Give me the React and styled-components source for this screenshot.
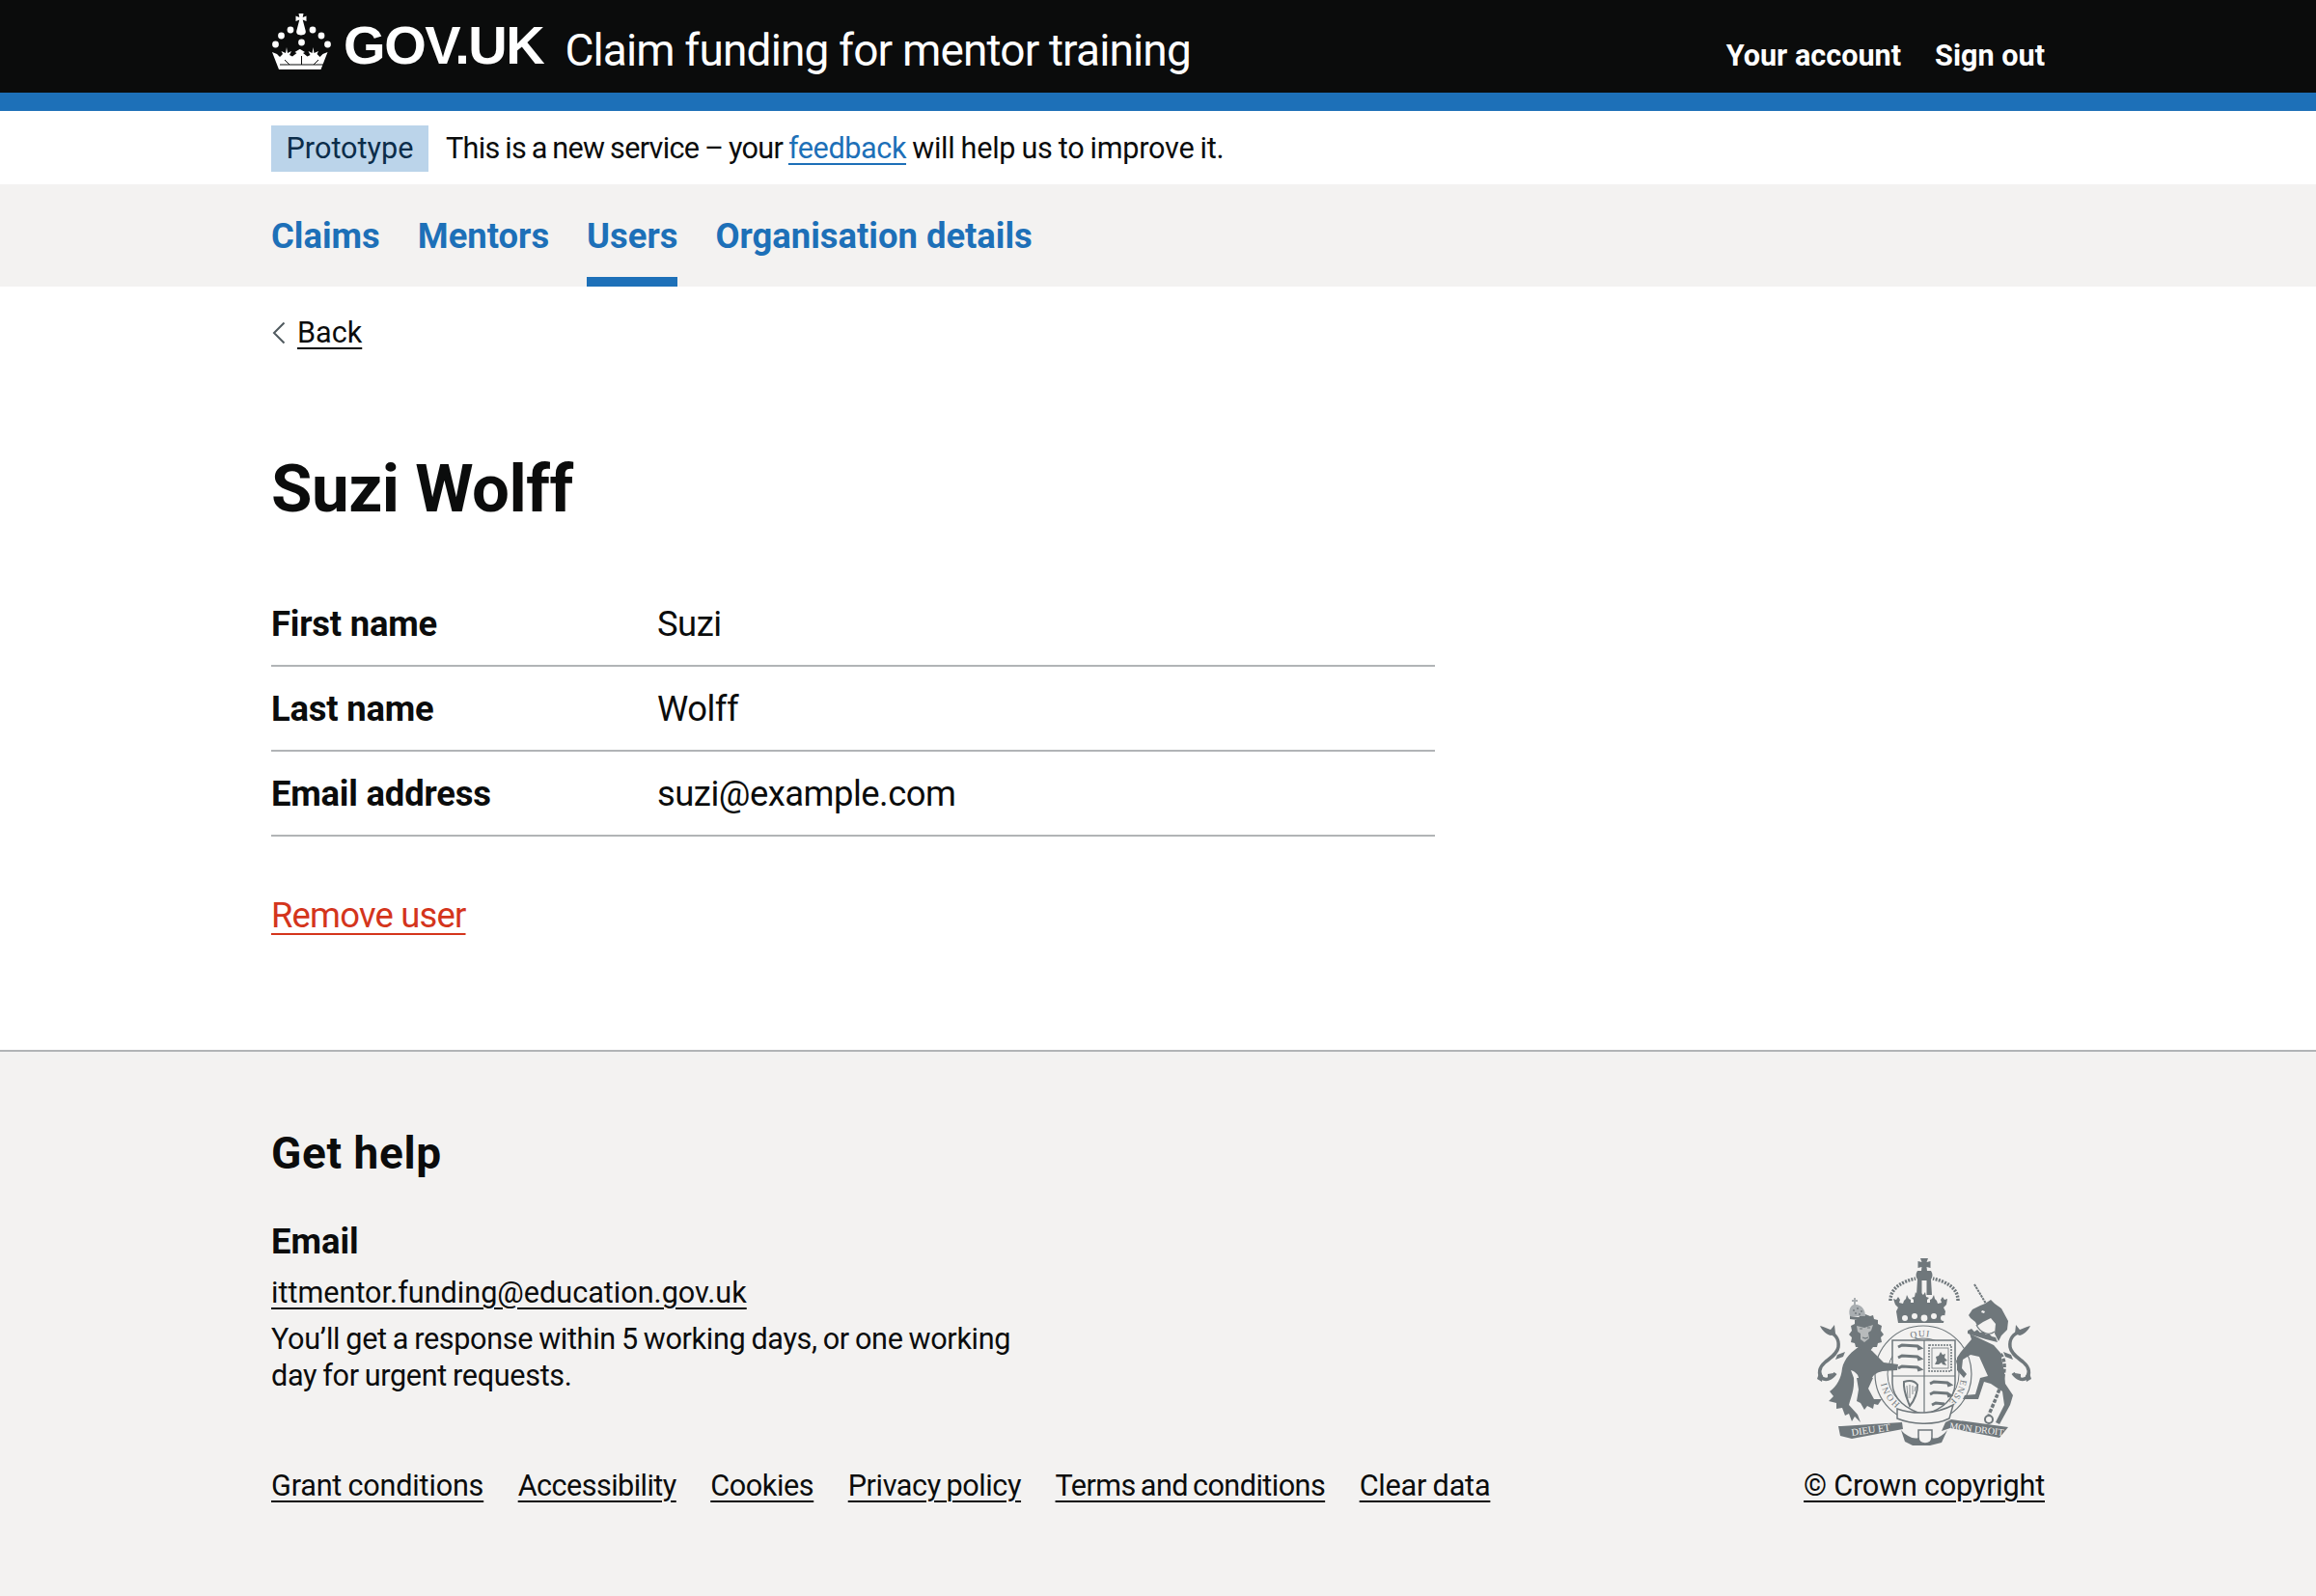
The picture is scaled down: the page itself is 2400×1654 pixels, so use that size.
import React from "react";
import styled, { createGlobalStyle } from "styled-components";

const GREY = "#6f777b";
const BG = "#f3f2f1";

const Global = createGlobalStyle`
  html, body { margin: 0; padding: 0; background: #fff; }
  body {
    font-family: Roboto, "Liberation Sans", sans-serif;
    color: #0b0c0c;
    -webkit-font-smoothing: antialiased;
  }
`;

const Page = styled.div`
  min-height: 1654px;
  display: flex;
  flex-direction: column;
`;

const Container = styled.div`
  width: 1838px;
  margin: 0 auto;
`;

const HeaderBar = styled.header`
  background: #0b0c0c;
  border-bottom: 19px solid #1d70b8;
  height: 96px;
`;

const HeaderInner = styled(Container)`
  display: flex;
  justify-content: space-between;
  height: 96px;
`;

const Brand = styled.div`
  display: flex;
  align-items: flex-start;
  padding-top: 13px;
`;

const LogoText = styled.span`
  color: #fff;
  font-family: "Liberation Sans", sans-serif;
  font-weight: 700;
  font-size: 56px;
  line-height: 64px;
  letter-spacing: -1.4px;
  margin-left: 12px;
  margin-top: 2px;
`;

const ServiceName = styled.span`
  color: #fff;
  font-size: 46px;
  line-height: 62px;
  letter-spacing: -0.85px;
  margin-left: 22px;
  margin-top: 8px;
`;

const AccountNav = styled.nav`
  display: flex;
  gap: 35px;
  padding-top: 38px;
`;

const AccountLink = styled.a`
  color: #fff;
  font-weight: 700;
  font-size: 30.6px;
  line-height: 40px;
`;

const PhaseBanner = styled(Container)`
  height: 76px;
  display: flex;
  align-items: center;
  font-size: 30.6px;
`;

const PhaseTag = styled.strong`
  background: #bbd4ea;
  color: #0c2d4a;
  font-weight: 400;
  height: 48px;
  line-height: 48px;
  width: 163px;
  text-align: center;
  margin: 2px 18px 0 0;
`;

const PhaseMessage = styled.span`
  letter-spacing: -0.7px;
  word-spacing: -1.2px;
`;

const PhaseTail = styled.span`
  letter-spacing: -0.25px;
`;

const BlueLink = styled.a`
  color: #1d70b8;
  letter-spacing: -0.4px;
  text-decoration: underline;
  text-decoration-thickness: 2px;
  text-underline-offset: 5px;
`;

const NavBand = styled.nav`
  background: #f3f2f1;
  height: 106px;
`;

const NavList = styled(Container)`
  display: flex;
  gap: 39px;
  height: 106px;
`;

const NavItem = styled.a`
  color: #1d70b8;
  font-weight: 700;
  font-size: 36.4px;
  line-height: 48px;
  padding-top: 30px;
  box-sizing: border-box;
  height: 106px;
  border-bottom: 10px solid ${({ $active }) => ($active ? "#1d70b8" : "transparent")};
`;

const Main = styled(Container)`
  flex: 1;
`;

const BackLink = styled.a`
  display: inline-flex;
  align-items: center;
  gap: 12px;
  margin: 28px 0 0 1px;
  font-size: 30.6px;
  line-height: 40px;
  color: #0b0c0c;
`;

const BackText = styled.span`
  text-decoration: underline;
  text-decoration-thickness: 2px;
  text-underline-offset: 5px;
`;

const Title = styled.h1`
  font-size: 69px;
  line-height: 76px;
  font-weight: 700;
  letter-spacing: -0.5px;
  margin: 104px 0 0;
`;

const SummaryList = styled.dl`
  width: 1206px;
  margin: 58px 0 0;
`;

const SummaryRow = styled.div`
  display: grid;
  grid-template-columns: 400px 1fr;
  height: 88px;
  box-sizing: border-box;
  border-bottom: 2px solid #b1b4b6;
  font-size: 36.4px;
  line-height: 48px;
  padding-top: 20px;
`;

const RowKey = styled.dt`
  font-weight: 700;
  letter-spacing: -0.2px;
`;

const RowValue = styled.dd`
  margin: 0;
  letter-spacing: -0.5px;
`;

const RemoveLink = styled.a`
  display: block;
  width: fit-content;
  margin-top: 58px;
  color: #d4351c;
  font-size: 36.4px;
  line-height: 48px;
  letter-spacing: -0.8px;
  text-decoration: underline;
  text-decoration-thickness: 2px;
  text-underline-offset: 6px;
`;

const FooterBand = styled.footer`
  background: #f3f2f1;
  border-top: 2px solid #b1b4b6;
  height: 566px;
  box-sizing: border-box;
`;

const FooterInner = styled(Container)`
  padding-top: 76px;
  font-size: 30.6px;
  line-height: 38px;
`;

const HelpHeading = styled.h2`
  font-size: 46px;
  line-height: 58px;
  font-weight: 700;
  letter-spacing: 0.6px;
  margin: 0;
`;

const HelpSub = styled.h3`
  font-size: 36.4px;
  line-height: 48px;
  font-weight: 700;
  margin: 39px 0 0;
`;

const DarkLink = styled.a`
  color: #0b0c0c;
  text-decoration: underline;
  text-decoration-thickness: 2px;
  text-underline-offset: 5px;
  letter-spacing: ${({ $spacing }) => $spacing || 0}px;
  word-spacing: ${({ $words }) => $words || 0}px;
`;

const HelpEmail = styled.div`
  margin-top: 10px;
`;

const HelpText = styled.p`
  width: 800px;
  margin: 10px 0 0;
  letter-spacing: -0.33px;
  word-spacing: -1.2px;
`;

const FooterBottom = styled.div`
  display: flex;
  justify-content: space-between;
  align-items: flex-end;
  margin-top: -141px;
`;

const FooterLinks = styled.div`
  display: flex;
  gap: 35.5px;
`;

const CopyrightBlock = styled.div`
  display: flex;
  flex-direction: column;
  align-items: center;
  gap: 21px;
`;

const Crown = () => (
  <svg width="63" height="60" viewBox="10 7 63 60" fill="#fff">
    <path d="M38.5 8h5l-.8 4 3.800-1.400v5.400l-3.800-1.400 3 11.500c.6 2.600-1.200 4.400-4.700 4.400s-5.300-1.800-4.700-4.400l3-11.500-3.800 1.400v-5.400l3.800 1.400z" />
    <circle cx="30" cy="25" r="3.400" />
    <circle cx="53" cy="25" r="3.400" />
    <circle cx="20.500" cy="31" r="3.400" />
    <circle cx="62" cy="31" r="3.400" />
    <circle cx="14.500" cy="40" r="3.400" />
    <circle cx="68.500" cy="40" r="3.400" />
    <circle cx="41.500" cy="38" r="3.400" />
    <path d="M11 48l5 2 3 3 3-3-1.500-3 4.500 2 1-6 1 6 4-2-2 4 3 1.500 4.500-3.500-2-1 5-3 .5 0 5 3-2 1 4.500 3.500 3-1.500-2-4 4 2 1-6 1 6 4.500-2-1.500 3 3 3 3-3 5-2-7 18H18z" />
    <path d="M19 61h45" stroke="#0b0c0c" strokeWidth="1.200" />
    <path d="M24 56l5 5M41.500 52v9M59 56l-5 5" stroke="#0b0c0c" strokeWidth="1" />
  </svg>
);

const Chevron = () => (
  <svg width="14" height="24" viewBox="0 0 14 24" fill="none" stroke="#505a5f" strokeWidth="2">
    <path d="M12.500 1.500L2 12l10.500 10.500" />
  </svg>
);

const Crest = () => (
  <svg width="224" height="196" viewBox="0 0 224 196" fill={GREY}>
    {/* royal crown */}
    <path d="M108 0h8l-1.500 4 4-1v7l-4-1 .5 4h-6l.5-4-4 1V3l4 1z" />
    <path d="M105 13h14c2 3 2 6 0 9l1 16h-16l1-16c-2-3-2-6 0-9z" />
    <rect x="109.500" y="23" width="5" height="15" fill={BG} />
    <path d="M77 44C77 30 90 24 103 21M147 44C147 30 134 24 121 21" fill="none" stroke={GREY} strokeWidth="3.500" strokeDasharray="2 1.300" />
    <path d="M80 42l3 1 2-3 2 3-1 3 4 1 1-3 2-2 1-4 2 4 2 1 0 3 3 0 0-3-2-2 3-1 1-5 2 3 3-3 3 3 2-3 1 5 3 1-2 2 0 3 3 0 0-3 2-1 2-4 1 4 2 2 1 3 4-1-1-3 2-3 2 3 3-1-1 6-3 3 2 4-2 12H85l-2-12 2-4-3-3z" />
    <g fill={BG}>
      <circle cx="92" cy="62" r="3" />
      <circle cx="102" cy="60" r="3" />
      <circle cx="112" cy="62" r="3.400" />
      <circle cx="122" cy="60" r="3" />
      <circle cx="132" cy="62" r="3" />
    </g>
    {/* garter */}
    <circle cx="111" cy="120" r="50" fill={BG} stroke={GREY} strokeWidth="1.200" />
    <circle cx="111" cy="120" r="37" fill="none" stroke={GREY} strokeWidth="1" />
    <path id="garterTop" d="M96.400 84A39 39 0 0 1 125.600 84" fill="none" />
    <path id="garterLeft" d="M88.600 152A39 39 0 0 1 72 120" fill="none" />
    <path id="garterRight" d="M150 123.400A39 39 0 0 1 130.500 153.800" fill="none" />
    <g fontSize="9.500" fontFamily="Liberation Serif, serif" letterSpacing="1">
      <text><textPath href="#garterTop" startOffset="2">QUI</textPath></text>
      <text><textPath href="#garterLeft" startOffset="2">HONI</textPath></text>
      <text><textPath href="#garterRight" startOffset="2">ENSE</textPath></text>
    </g>
    {/* shield */}
    <path d="M79 85h65v44c0 17-14 28-32 33-18-5-33-16-33-33z" fill={BG} stroke={GREY} strokeWidth="1.500" />
    <path d="M112 85v77M79 122h65" stroke={GREY} strokeWidth="1.200" />
    <g stroke={GREY} strokeWidth="3" fill="none">
      <path d="M85 92l4-2 16 1 3 2-3 1M85 103l4-2 16 1 3 2-3 1M85 114l4-2 16 1 3 2-3 1" />
      <path d="M118 130l4-2 14 1 3 2-3 1M118 141l4-2 14 1 3 2-3 1M120 152l4-2 9 1" />
    </g>
    <rect x="117" y="90" width="23" height="27" fill="none" stroke={GREY} strokeWidth="1.500" strokeDasharray="2 1" />
    <rect x="120" y="93" width="17" height="21" fill="none" stroke={GREY} strokeWidth="0.800" />
    <path d="M123 110l2-4-1-4 3-1 2-4 2 3 3-1-1 4 3 3-3 1 2 4-4-1-1-2-3 2z" />
    <path d="M91 128c6-2 11-1 14 3 0 9-3 16-8 22-3-8-7-16-6-25z" fill="none" stroke={GREY} strokeWidth="2" />
    <path d="M94 132l1 13M97 131v14M100 132v9M103 133l-1 5" stroke={GREY} strokeWidth="0.800" />
    {/* lion */}
    <path d="M47 90C37 96 29 104 27 114c-1 10-5 18-13 24l4 5-5 5 8 2v6l6-1 3 8 4-2 3 8 3-5 6 6-3-8-9-10c2-8 6-16 5-28l-3-8c6 2 8 6 8 8h14c2-4 6-6 11-7l15-1 1-6-15-2-12-12-6-4z" />
    <path d="M42 124h17l-5 11 6 11h8l-4 6-4-1-1 5-6-3-3 4-4-7-4-2 2-12z" />
    <path d="M51 58l5 2 3-1 1 4 4 1 0 4 4 2-1 5 3 4-3 3 1 5-4 1-1 4-4 0-3 4-4-2-4 2-3-4-4 0-1-4-4-1 1-5-3-3 3-4-1-5 4-2 0-4 4-1 1-4 3 1z" />
    <path d="M42 70l8 2 9-3-2 6-3 2 1 6-5 4-4-3 0-6-3-2z" fill={BG} opacity="0.55" />
    <path d="M45 73h3M53 72h3M48 82l3 1 3-1" stroke={GREY} strokeWidth="1.200" fill="none" />
    <path d="M35 60c-2-7 1-11 4-12l0-3-2 0 0-2 2 0 0-2 2 0 0 2 2 0 0 2-2 0 0 3c6 0 10 5 10 12z" fill="#a9aeb1" />
    <path d="M35 60l18 2-1 3-17-2z" />
    <g fill={GREY}>
      <circle cx="39" cy="54" r="0.900" />
      <circle cx="43" cy="52" r="0.900" />
      <circle cx="47" cy="55" r="0.900" />
      <circle cx="41" cy="57" r="0.900" />
      <circle cx="45" cy="58" r="0.900" />
    </g>
    {/* lion tail */}
    <path d="M12 76C20 78 24 84 23 92c-1 7-8 11-14 16-6 5-7 12-3 16 4 3 10 1 14-5" fill="none" stroke={GREY} strokeWidth="3.500" />
    <path d="M4 70c5 1 7 3 11 4l4-5 1 9-5 2c-4-1-9-5-11-10zM22 100l8-3-2 5-8 3zM4 116l-3 9 5 3 1-6zM12 120l6-1-6 8z" />
    {/* unicorn horn */}
    <path d="M164 27l12 20" fill="none" stroke={GREY} strokeWidth="2" strokeDasharray="2.500 0.800" />
    {/* unicorn head and mane */}
    <path d="M160 62l-2-3 4-6 8-4 5-2 6-4 4 4 7 5 7 13-1 9-6 6-3 6-4-8 1-10-5-6-8 4-6 4-2-4z" />
    <path d="M172 54l3 1-1 2-3-1z" fill={BG} />
    <path d="M166 69c4 8 13 12 19 7" fill="none" stroke={GREY} strokeWidth="1.200" />
    {/* collar */}
    <path d="M157 75l4-2 3 3 3-2 3 3 3-1 3 3 3-1 3 3 4 1 2 5-12-3-19-6z" />
    {/* unicorn body */}
    <path d="M159 78l2 6-11 13-4 6v13l7 8 3-4-5-6 1-9 8-5 9 2 9 20-8 2-5 17-11 1-2 4h16l6-18 7 2 12 8 2 14-9 18 4 2 11-20 3-10-8-12-1-12-4-20-7-8z" />
    <path d="M191 99c10 12 0 36-12 63" fill="none" stroke={GREY} strokeWidth="3.500" strokeDasharray="4 1.500" />
    <circle cx="179" cy="167" r="4" fill="none" stroke={GREY} strokeWidth="2" />
    {/* unicorn tail */}
    <path d="M212 76C204 78 200 84 201 92c1 7 8 11 14 16 6 5 7 12 3 16-4 3-10 1-14-5" fill="none" stroke={GREY} strokeWidth="3.500" />
    <path d="M222 70c-5 1-7 3-11 4l-4-5-1 9 5 2c4-1 9-5 11-10zM202 100l-8-3 2 5 8 3zM220 116l3 9-5 3-1-6zM212 120l-6-1 6 8z" />
    {/* mottoes */}
    <path d="M89 170l1 7-53 10-12-3-2-10 3 0z" />
    <path d="M134 170l6-3 59 8-9 11-51-10-9 3z" />
    <text fill={BG} fontSize="10.500" fontFamily="Liberation Serif, serif" transform="translate(37 184) rotate(-8)">DIEU ET</text>
    <text fill={BG} fontSize="10" fontFamily="Liberation Serif, serif" transform="translate(138 177) rotate(7)">MON DROIT</text>
    {/* scroll and base */}
    <path d="M84 156c16 6 40 6 58-4l-4 14c-16 8-40 6-54 0z" fill={BG} stroke={GREY} strokeWidth="1.500" />
    <path d="M88 178c5 6 13 10 18 8v-6h14v6c5 2 11-2 16-8l-6 13-12 3h-18l-8-4z" />
    <path d="M106 178h14v7c0 5-3 7-7 7s-7-2-7-7z" fill={BG} stroke={GREY} strokeWidth="1.500" />
  </svg>
);

const footerLinks = [
  { label: "Grant conditions", spacing: -0.2, words: -1 },
  { label: "Accessibility", spacing: -0.55 },
  { label: "Cookies", spacing: -0.4 },
  { label: "Privacy policy", spacing: -0.4, words: -1.5 },
  { label: "Terms and conditions", spacing: -0.55, words: -2 },
  { label: "Clear data", spacing: -0.2, words: -1 },
];

const rows = [
  ["First name", "Suzi"],
  ["Last name", "Wolff"],
  ["Email address", "suzi@example.com"],
];

export default function App() {
  return (
    <Page>
      <Global />
      <HeaderBar>
        <HeaderInner>
          <Brand>
            <Crown />
            <LogoText>GOV.UK</LogoText>
            <ServiceName>Claim funding for mentor training</ServiceName>
          </Brand>
          <AccountNav>
            <AccountLink>Your account</AccountLink>
            <AccountLink>Sign out</AccountLink>
          </AccountNav>
        </HeaderInner>
      </HeaderBar>
      <PhaseBanner>
        <PhaseTag>Prototype</PhaseTag>
        <PhaseMessage>
          This is a new service – your <BlueLink>feedback</BlueLink>
          <PhaseTail> will help us to improve it.</PhaseTail>
        </PhaseMessage>
      </PhaseBanner>
      <NavBand>
        <NavList>
          <NavItem>Claims</NavItem>
          <NavItem>Mentors</NavItem>
          <NavItem $active>Users</NavItem>
          <NavItem>Organisation details</NavItem>
        </NavList>
      </NavBand>
      <Main>
        <BackLink>
          <Chevron />
          <BackText>Back</BackText>
        </BackLink>
        <Title>Suzi Wolff</Title>
        <SummaryList>
          {rows.map(([key, value]) => (
            <SummaryRow key={key}>
              <RowKey>{key}</RowKey>
              <RowValue>{value}</RowValue>
            </SummaryRow>
          ))}
        </SummaryList>
        <RemoveLink>Remove user</RemoveLink>
      </Main>
      <FooterBand>
        <FooterInner>
          <HelpHeading>Get help</HelpHeading>
          <HelpSub>Email</HelpSub>
          <HelpEmail>
            <DarkLink>ittmentor.funding@education.gov.uk</DarkLink>
          </HelpEmail>
          <HelpText>
            You’ll get a response within 5 working days, or one working day for urgent requests.
          </HelpText>
          <FooterBottom>
            <FooterLinks>
              {footerLinks.map((l) => (
                <DarkLink key={l.label} $spacing={l.spacing} $words={l.words}>{l.label}</DarkLink>
              ))}
            </FooterLinks>
            <CopyrightBlock>
              <Crest />
              <DarkLink $spacing={-0.2}>© Crown copyright</DarkLink>
            </CopyrightBlock>
          </FooterBottom>
        </FooterInner>
      </FooterBand>
    </Page>
  );
}
